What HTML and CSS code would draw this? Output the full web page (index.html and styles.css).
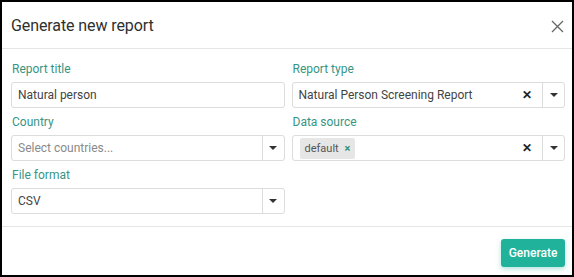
FILE: index.html
```html
<!DOCTYPE html>
<html>
<head>
    <meta charset="utf-8">
    <link rel="stylesheet" href="styles.css">
</head>
<body>

<div class="modal">
    <div class="modal-header">
        <span class="modal-title">Generate new report</span>
        <span class="close">
            <svg width="13" height="13" viewBox="0 0 13 13"><path d="M1 1L12 12M12 1L1 12" stroke="#666" stroke-width="1.3" fill="none"/></svg>
        </span>
    </div>

    <div class="modal-body">
        <div class="field">
            <label>Report title</label>
            <div class="control">
                <span class="value">Natural person</span>
            </div>
        </div>
        <div class="field">
            <label>Report type</label>
            <div class="control">
                <span class="value">Natural Person Screening Report</span>
                <span class="clear">&#10005;</span>
                <span class="arrow"><i class="caret"></i></span>
            </div>
        </div>
        <div class="field">
            <label>Country</label>
            <div class="control">
                <span class="value placeholder">Select countries...</span>
                <span class="arrow"><i class="caret"></i></span>
            </div>
        </div>
        <div class="field">
            <label>Data source</label>
            <div class="control">
                <span class="value"><span class="tag">default <b>&#215;</b></span></span>
                <span class="clear">&#10005;</span>
                <span class="arrow"><i class="caret"></i></span>
            </div>
        </div>
        <div class="field">
            <label>File format</label>
            <div class="control">
                <span class="value">CSV</span>
                <span class="arrow"><i class="caret"></i></span>
            </div>
        </div>
    </div>

    <div class="modal-footer">
        <button class="btn-generate">Generate</button>
    </div>
</div>

</body>
</html>
```

FILE: styles.css
```css
* {
    box-sizing: border-box;
}

body {
    margin: 0;
    font-family: Roboto, "Liberation Sans", sans-serif;
    background: #fff;
}

.modal {
    width: 574px;
    height: 277px;
    border: 2px solid #000;
    display: flex;
    flex-direction: column;
}

.modal-header {
    height: 47px;
    display: flex;
    align-items: center;
    justify-content: space-between;
    padding: 0 8px 0 9px;
    border-bottom: 1px solid #e6e6e6;
}

.modal-title {
    font-size: 16px;
    color: #2f2f2f;
    letter-spacing: -0.1px;
}

.close {
    display: flex;
    margin-top: 2px;
}

.modal-body {
    display: grid;
    grid-template-columns: 1fr 1fr;
    column-gap: 7px;
    row-gap: 6px;
    padding: 12px 7px 12px 9px;
    border-bottom: 1px solid #e6e6e6;
}

.field label {
    display: block;
    font-size: 12px;
    line-height: 16px;
    color: #379584;
    margin-bottom: 5px;
    padding-left: 1px;
}

.control {
    height: 26px;
    border: 1px solid #dcdcdc;
    border-radius: 3px;
    display: flex;
    align-items: center;
    font-size: 12px;
    color: #444;
}

.value {
    flex: 1;
    padding-left: 6px;
    display: flex;
    align-items: center;
}

.placeholder {
    color: #8a8a8a;
}

.tag {
    background: #e6e6e6;
    border-radius: 2px;
    padding: 4px 5px;
    font-size: 11px;
    color: #555;
    margin-left: 1px;
}

.tag b {
    color: #2f8d7c;
    margin-left: 3px;
}

.clear {
    font-size: 12px;
    font-weight: bold;
    color: #222;
    padding: 0 10px 0 6px;
}

.arrow {
    width: 22px;
    height: 100%;
    border-left: 1px solid #dcdcdc;
    display: flex;
    align-items: center;
    justify-content: center;
}

.caret {
    width: 0;
    height: 0;
    border-left: 4px solid transparent;
    border-right: 4px solid transparent;
    border-top: 4px solid #333;
}

.modal-footer {
    flex: 1;
    display: flex;
    justify-content: flex-end;
    align-items: flex-start;
    padding: 12px 7px 0 0;
}

.btn-generate {
    font-family: Roboto, "Liberation Sans", sans-serif;
    width: 64px;
    height: 28px;
    background: #20b29a;
    color: #fff;
    font-size: 12px;
    font-weight: 500;
    border: none;
    border-radius: 3px;
    box-shadow: 0 2px 5px rgba(32, 178, 154, 0.35);
}
```
